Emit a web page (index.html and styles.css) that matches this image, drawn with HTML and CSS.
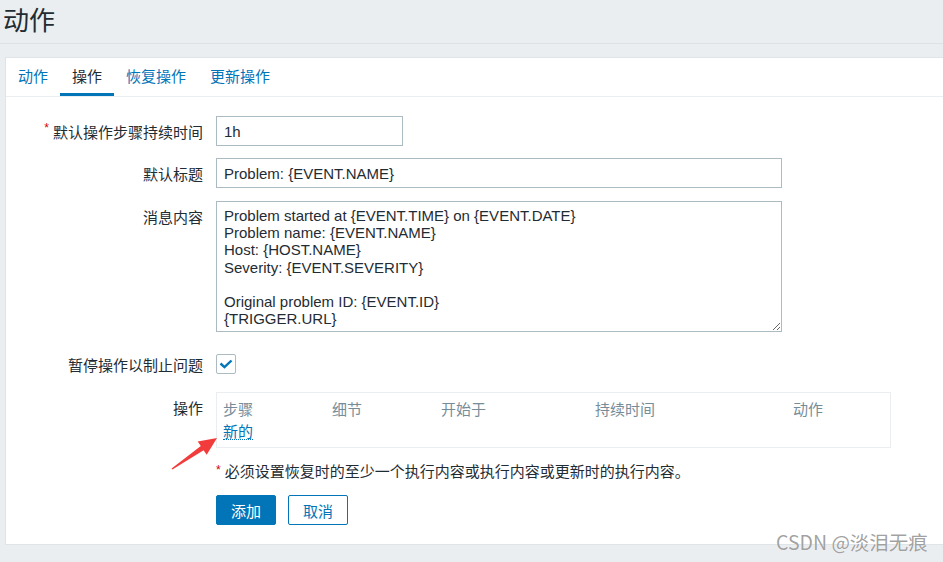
FILE: index.html
```html
<!DOCTYPE html>
<html lang="zh-CN">
<head>
<meta charset="utf-8">
<title>动作</title>
<link rel="stylesheet" href="styles.css">
</head>
<body>
<header class="page-head"><h1 class="page-title">动作</h1></header>
<main class="card">
  <nav class="tabs">
    <a class="tab">动作</a>
    <a class="tab active">操作</a>
    <a class="tab">恢复操作</a>
    <a class="tab">更新操作</a>
  </nav>
  <form class="form">
    <div class="row">
      <label class="label"><span class="req">*</span> 默认操作步骤持续时间</label>
      <div class="field"><input class="input input-short" type="text" value="1h"></div>
    </div>
    <div class="row">
      <label class="label">默认标题</label>
      <div class="field"><input class="input input-long" type="text" value="Problem: {EVENT.NAME}"></div>
    </div>
    <div class="row row-text">
      <label class="label">消息内容</label>
      <div class="field"><textarea class="textarea">Problem started at {EVENT.TIME} on {EVENT.DATE}
Problem name: {EVENT.NAME}
Host: {HOST.NAME}
Severity: {EVENT.SEVERITY}

Original problem ID: {EVENT.ID}
{TRIGGER.URL}</textarea></div>
    </div>
    <div class="row row-check">
      <label class="label">暂停操作以制止问题</label>
      <div class="field field-check">
        <span class="checkbox"><svg width="14" height="10" viewBox="0 0 14 10"><path d="M1.5 4.5 L5.5 8.2 L12.5 1.5" fill="none" stroke="#0275b8" stroke-width="2.4"/></svg></span>
      </div>
    </div>
    <div class="row row-ops">
      <label class="label">操作</label>
      <div class="field">
        <div class="ops">
          <div class="ops-grid">
            <span class="ops-h">步骤</span>
            <span class="ops-h">细节</span>
            <span class="ops-h">开始于</span>
            <span class="ops-h">持续时间</span>
            <span class="ops-h">动作</span>
          </div>
          <div class="ops-new"><a class="link-new">新的</a></div>
        </div>
      </div>
    </div>
    <div class="row row-note">
      <span class="label-empty"></span>
      <p class="note"><span class="note-req">*</span> 必须设置恢复时的至少一个执行内容或执行内容或更新时的执行内容。</p>
    </div>
    <div class="row row-buttons">
      <span class="label-empty"></span>
      <div class="buttons">
        <button class="btn btn-primary" type="button">添加</button>
        <button class="btn btn-secondary" type="button">取消</button>
      </div>
    </div>
  </form>
</main>
<svg class="arrow" width="60" height="50" viewBox="0 0 60 50">
  <polygon points="6.6,43.4 35.8,21.1 32.7,16.6 52,13 41.7,29.8 38.6,25.3 7.4,44.6" fill="#f23c3c"/>
</svg>
<div class="watermark">CSDN @淡泪无痕</div>
</body>
</html>
```
FILE: styles.css
```css
html, body {
  margin: 0;
  padding: 0;
}
body {
  background: #ebeef1;
  font-family: "Liberation Sans", Arial, "Noto Sans CJK SC", sans-serif;
  font-size: 15px;
  color: #1f2c33;
  position: relative;
  min-height: 562px;
  overflow: hidden;
}
.page-head {
  height: 43px;
  border-bottom: 1px solid #dde2e6;
}
.page-title {
  margin: 0;
  padding-left: 3px;
  font-size: 26px;
  line-height: 43px;
  height: 43px;
  font-weight: normal;
  color: #1f2c33;
}
.card {
  margin: 13px 0 0 5px;
  background: #fff;
  border: 1px solid #dfe4e7;
  border-right: 0;
  padding-bottom: 19px;
}
.tabs {
  display: flex;
  border-bottom: 1px solid #ebeef1;
}
.tab {
  height: 38px;
  padding: 0 12px;
  display: flex;
  align-items: center;
  box-sizing: border-box;
  border-bottom: 3px solid transparent;
  color: #0275b8;
}
.tab.active {
  color: #1f2c33;
  border-bottom-color: #0275b8;
}
.form {
  display: flex;
  flex-direction: column;
  gap: 12px;
  padding-top: 19px;
}
.row {
  display: grid;
  grid-template-columns: 197px 1fr;
  column-gap: 13px;
  align-items: start;
}
.row-text { margin-top: 1px; }
.row-check { margin-top: 5px; margin-bottom: 1px; }
.row-buttons { margin-top: -1px; }
.label {
  display: flex;
  justify-content: flex-end;
  align-items: center;
  gap: 4px;
  height: 30px;
  color: #1f2c33;
  white-space: nowrap;
}
.label-empty {
  display: block;
  height: 0;
}
.req, .note-req {
  color: #d40000;
  font-size: 12px;
  position: relative;
  top: -3px;
}
.input {
  height: 30px;
  box-sizing: border-box;
  border: 1px solid #acbbc2;
  padding: 0 7px;
  font: inherit;
  color: #1f2c33;
  background: #fff;
  outline: none;
  display: block;
  margin: 0;
}
.input-short { width: 187px; }
.input-long { width: 566px; }
.textarea {
  display: block;
  width: 566px;
  height: 131px;
  box-sizing: border-box;
  border: 1px solid #acbbc2;
  padding: 5px 7px 3px;
  font: inherit;
  line-height: 17.2px;
  color: #1f2c33;
  margin: 0;
  outline: none;
}
.field-check {
  height: 30px;
  display: flex;
  align-items: center;
}
.checkbox {
  width: 20px;
  height: 20px;
  box-sizing: border-box;
  border: 1px solid #acbbc2;
  border-radius: 2px;
  display: flex;
  align-items: center;
  justify-content: center;
  background: #fff;
}
.ops {
  width: 675px;
  height: 56px;
  box-sizing: border-box;
  border: 1px solid #ebeef1;
  padding: 8px 6px 0;
}
.ops-grid {
  display: grid;
  grid-template-columns: 109px 109px 154px 198px 1fr;
  height: 18px;
  line-height: 18px;
}
.ops-h {
  color: #768d99;
}
.ops-new {
  margin-top: 4px;
  height: 18px;
  line-height: 18px;
}
.link-new {
  color: #0275b8;
  display: inline-block;
  line-height: 15px;
  border-bottom: 1px dotted #0275b8;
}
.note {
  margin: 0;
  height: 24px;
  line-height: 24px;
  color: #1f2c33;
  white-space: nowrap;
}
.buttons {
  display: flex;
  gap: 12px;
}
.btn {
  width: 60px;
  height: 30px;
  box-sizing: border-box;
  border-radius: 2px;
  font: inherit;
  padding: 0;
  cursor: pointer;
}
.btn-primary {
  background: #0275b8;
  border: 1px solid #0275b8;
  color: #fff;
}
.btn-secondary {
  background: #fff;
  border: 1px solid #0275b8;
  color: #0275b8;
}
.arrow {
  position: absolute;
  left: 165px;
  top: 425px;
}
.watermark {
  position: absolute;
  left: 776px;
  top: 530px;
  font-family: "Noto Sans CJK SC", "Liberation Sans", sans-serif;
  font-size: 19.5px;
  line-height: 24px;
  color: rgba(120, 120, 120, 0.7);
  text-shadow: 0 0 1px #fff;
  white-space: nowrap;
}
```
